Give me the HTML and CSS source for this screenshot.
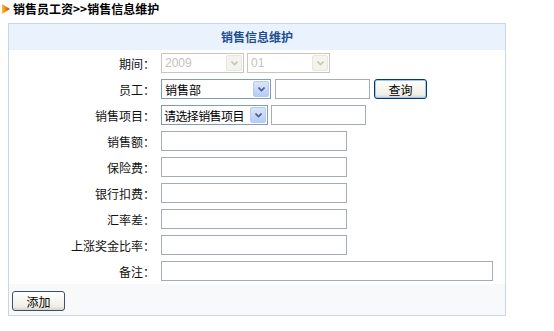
FILE: index.html
```html
<!DOCTYPE html>
<html lang="zh-CN">

<head>
    <meta charset="UTF-8">
    <title>销售信息维护</title>
    <link rel="stylesheet" href="styles.css">
</head>

<body>
    <div class="crumb">
        <svg class="crumb-icon" width="8" height="10" viewBox="0 0 8 10">
            <defs>
                <linearGradient id="arrowGrad" x1="0" y1="0" x2="1" y2="0">
                    <stop offset="0" stop-color="#f9c81e" />
                    <stop offset="1" stop-color="#d6301b" />
                </linearGradient>
            </defs>
            <polygon points="0,0 8,5 0,10" fill="url(#arrowGrad)" />
        </svg>
        <span>销售员工资&gt;&gt;销售信息维护</span>
    </div>

    <div class="panel">
        <div class="panel-head">销售信息维护</div>

        <div class="form">
            <div class="row">
                <label class="row-label">期间：</label>
                <div class="field field-tight">
                    <span class="combo combo-disabled w83">
                        <select disabled><option>2009</option></select>
                        <span class="combo-arrow">
                            <svg width="7" height="5" viewBox="0 0 7 5"><polyline points="0.5,0.5 3.5,3.5 6.5,0.5" /></svg>
                        </span>
                    </span>
                    <span class="combo combo-disabled w83">
                        <select disabled><option>01</option></select>
                        <span class="combo-arrow">
                            <svg width="7" height="5" viewBox="0 0 7 5"><polyline points="0.5,0.5 3.5,3.5 6.5,0.5" /></svg>
                        </span>
                    </span>
                </div>
            </div>

            <div class="row">
                <label class="row-label">员工：</label>
                <div class="field">
                    <span class="combo w110">
                        <select><option>销售部</option></select>
                        <span class="combo-arrow">
                            <svg width="7" height="5" viewBox="0 0 7 5"><polyline points="0.5,0.5 3.5,3.5 6.5,0.5" /></svg>
                        </span>
                    </span>
                    <input class="text w95" type="text">
                    <button class="btn btn-focus">查询</button>
                </div>
            </div>

            <div class="row">
                <label class="row-label">销售项目：</label>
                <div class="field field-tight">
                    <span class="combo w107">
                        <select class="select-narrow"><option>请选择销售项目</option></select>
                        <span class="combo-arrow">
                            <svg width="7" height="5" viewBox="0 0 7 5"><polyline points="0.5,0.5 3.5,3.5 6.5,0.5" /></svg>
                        </span>
                    </span>
                    <input class="text w95" type="text">
                </div>
            </div>

            <div class="row">
                <label class="row-label">销售额：</label>
                <div class="field"><input class="text w186" type="text"></div>
            </div>
            <div class="row">
                <label class="row-label">保险费：</label>
                <div class="field"><input class="text w186" type="text"></div>
            </div>
            <div class="row">
                <label class="row-label">银行扣费：</label>
                <div class="field"><input class="text w186" type="text"></div>
            </div>
            <div class="row">
                <label class="row-label">汇率差：</label>
                <div class="field"><input class="text w186" type="text"></div>
            </div>
            <div class="row">
                <label class="row-label">上涨奖金比率：</label>
                <div class="field"><input class="text w186" type="text"></div>
            </div>
            <div class="row">
                <label class="row-label">备注：</label>
                <div class="field"><input class="text w332" type="text"></div>
            </div>
        </div>

        <div class="panel-foot">
            <button class="btn">添加</button>
        </div>
    </div>
</body>

</html>
```

FILE: styles.css
```css
body {
    margin: 0;
    padding: 0;
    font-family: "Noto Sans CJK SC", "Liberation Sans", sans-serif;
    font-size: 12px;
    color: #000;
    background-color: #fff;
}

.crumb {
    display: flex;
    align-items: center;
    gap: 3px;
    height: 17px;
    padding-left: 2px;
    margin-bottom: 6px;
    font-weight: bold;
}

.crumb-icon {
    display: block;
}

.panel {
    width: 496px;
    margin-left: 8px;
    border: 1px solid #cad6e3;
}

.panel-head {
    height: 26px;
    line-height: 26px;
    text-align: center;
    font-weight: bold;
    color: #1e4e8f;
    background-color: #eaf3fd;
}

.row {
    display: flex;
    align-items: center;
    gap: 6px;
    height: 26px;
}

.row-label {
    width: 146px;
    text-align: right;
    color: #111;
}

.field {
    display: flex;
    align-items: center;
    gap: 4px;
}

.field-tight {
    gap: 3px;
}

.text {
    box-sizing: border-box;
    height: 20px;
    padding: 0 3px;
    border: 1px solid #a5acb5;
    font: inherit;
    background-color: #fff;
}

.w83 { width: 83px; }
.w95 { width: 95px; }
.w107 { width: 107px; }
.w110 { width: 110px; }
.w186 { width: 186px; }
.w332 { width: 332px; }

.combo {
    box-sizing: border-box;
    display: inline-flex;
    align-items: center;
    height: 20px;
    border: 1px solid #7f9db9;
    background-color: #fff;
}

.combo select {
    appearance: none;
    -webkit-appearance: none;
    flex: 1;
    min-width: 0;
    height: 18px;
    padding: 0 3px;
    border: 0;
    outline: none;
    background: transparent;
    font-family: "Noto Sans CJK SC", "Liberation Sans", sans-serif;
    font-size: 12px;
    color: #000;
}

.combo .select-narrow {
    padding: 0 2px;
    letter-spacing: -0.6px;
}

.combo-arrow {
    box-sizing: border-box;
    display: flex;
    align-items: center;
    justify-content: center;
    width: 16px;
    height: 16px;
    margin-right: 1px;
    border: 1px solid #b7c9f0;
    border-radius: 2px;
    background: linear-gradient(#d8e5fd, #b6cbf6);
}

.combo-arrow svg {
    display: block;
}

.combo-arrow polyline {
    fill: none;
    stroke: #4d6185;
    stroke-width: 1.6;
}

.combo-disabled {
    border-color: #c9c7ba;
}

.combo-disabled select {
    color: #aca899;
    font-family: "Liberation Sans", sans-serif;
}

.combo-disabled .combo-arrow {
    border-color: #e8e7df;
    background: #f4f3ee;
}

.combo-disabled .combo-arrow polyline {
    stroke: #c9c7ba;
}

.btn {
    box-sizing: border-box;
    width: 53px;
    height: 20px;
    padding: 0;
    border: 1px solid #3c4f6e;
    border-radius: 3px;
    background: linear-gradient(#ffffff, #f0efe6 80%, #d8d5c5);
    font-family: "Noto Sans CJK SC", sans-serif;
    font-size: 12px;
    color: #000;
    cursor: pointer;
}

.btn-focus {
    border-color: #003c74;
    box-shadow: inset 0 0 0 1px #a9c3f0;
}

.panel-foot {
    display: flex;
    align-items: flex-start;
    height: 31px;
    box-sizing: border-box;
    padding: 7px 0 0 3px;
    background-color: #f8f9fa;
}
```
